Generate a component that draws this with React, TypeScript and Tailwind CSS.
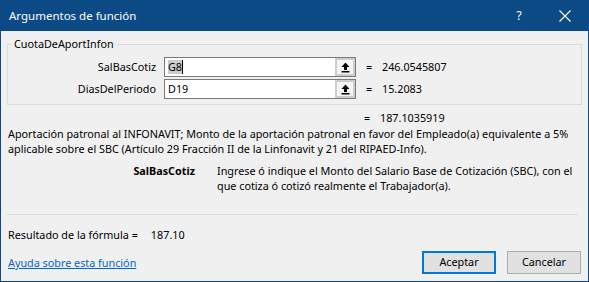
const args = [
  { name: "SalBasCotiz", value: "G8", result: "246.0545807", selected: true },
  { name: "DiasDelPeriodo", value: "D19", result: "15.2083", selected: false },
];

function CollapseButton() {
  return (
    <div className="flex h-[18px] w-[20px] items-center justify-center border-2 border-[#cdcdcd] bg-[#f5f5f5]">
      <svg width="9" height="11" viewBox="0 0 9 11">
        <path d="M4.5 0.5 L8.5 5 L6 5 L6 8 L3 8 L3 5 L0.5 5 Z" fill="#000" />
        <rect x="0.5" y="9" width="8" height="1.5" fill="#000" />
      </svg>
    </div>
  );
}

export default function App() {
  return (
    <div className="flex h-[282px] w-[589px] flex-col border-x border-b border-[#0c4a86] bg-[#f0f0f0] font-['Noto_Sans',sans-serif] text-[10.8px] text-black">
      <div className="flex h-[31px] shrink-0 items-center bg-[#0c4a86] pl-[8px] text-[11.5px] text-white">
        <span className="flex-1">Argumentos de función</span>
        <span className="w-[12px] text-center text-[12px]">?</span>
        <svg className="ml-[34px] mr-[17px]" width="12" height="12" viewBox="0 0 12 12">
          <path d="M0.5 0.5 L11.5 11.5 M11.5 0.5 L0.5 11.5" stroke="#fff" strokeWidth="1.1" />
        </svg>
      </div>

      <div className="flex flex-1 flex-col px-[6px]">
        <fieldset className="mt-[5px] h-[69px] border border-[#dcdcdc] px-0 pt-[5px]">
          <legend className="ml-[4px] px-[2px] leading-[16px]">CuotaDeAportInfon</legend>
          <div className="flex flex-col gap-[2px]">
            {args.map((a) => (
              <div key={a.name} className="flex h-[20px] items-center">
                <div className="w-[148px] text-right">{a.name}</div>
                <div className="ml-[8px] flex h-[20px] w-[192px] items-center border border-[#7a7a7a] bg-white pl-[3px]">
                  <div className="flex flex-1 items-center">
                    {a.selected ? (
                      <>
                        <span className="bg-[#cccccc] leading-[14px]">{a.value}</span>
                        <span className="h-[14px] w-px bg-black" />
                      </>
                    ) : (
                      <span>{a.value}</span>
                    )}
                  </div>
                  <CollapseButton />
                </div>
                <span className="ml-[10px] w-[16px]">=</span>
                <span>{a.result}</span>
              </div>
            ))}
          </div>
        </fieldset>

        <div className="mt-[5px] flex h-[16px] items-center pl-[357px]">
          <span className="w-[16px]">=</span>
          <span>187.1035919</span>
        </div>

        <p className="pl-px leading-[15px]">
          Aportación patronal al INFONAVIT; Monto de la aportación patronal en favor del Empleado(a) equivalente a 5% aplicable sobre el SBC (Artículo 29 Fracción II de la Linfonavit y 21 del RIPAED-Info).
        </p>

        <div className="mt-[7px] flex leading-[15px]">
          <div className="w-[188px] text-right font-bold">SalBasCotiz</div>
          <div className="ml-[22px] flex-1">
            Ingrese ó indique el Monto del Salario Base de Cotización (SBC), con el que cotiza ó cotizó realmente el Trabajador(a).
          </div>
        </div>

        <div className="mt-[21px] mr-[4px] h-px bg-[#dcdcdc]" />

        <div className="mt-[12px] flex pl-px leading-[16px]">
          <span>Resultado de la fórmula =</span>
          <span className="ml-[13px]">187.10</span>
        </div>

        <div className="mt-[8px] flex items-start justify-between pl-px">
          <a className="mt-[4px] leading-[16px] text-[#0066cc] underline">Ayuda sobre esta función</a>
          <div className="mr-[1px] flex gap-[11px]">
            <button className="h-[23px] w-[74px] border-2 border-[#0078d7] bg-[#e1e1e1]">Aceptar</button>
            <button className="h-[23px] w-[74px] border border-[#adadad] bg-[#e1e1e1]">Cancelar</button>
          </div>
        </div>
      </div>
    </div>
  );
}
